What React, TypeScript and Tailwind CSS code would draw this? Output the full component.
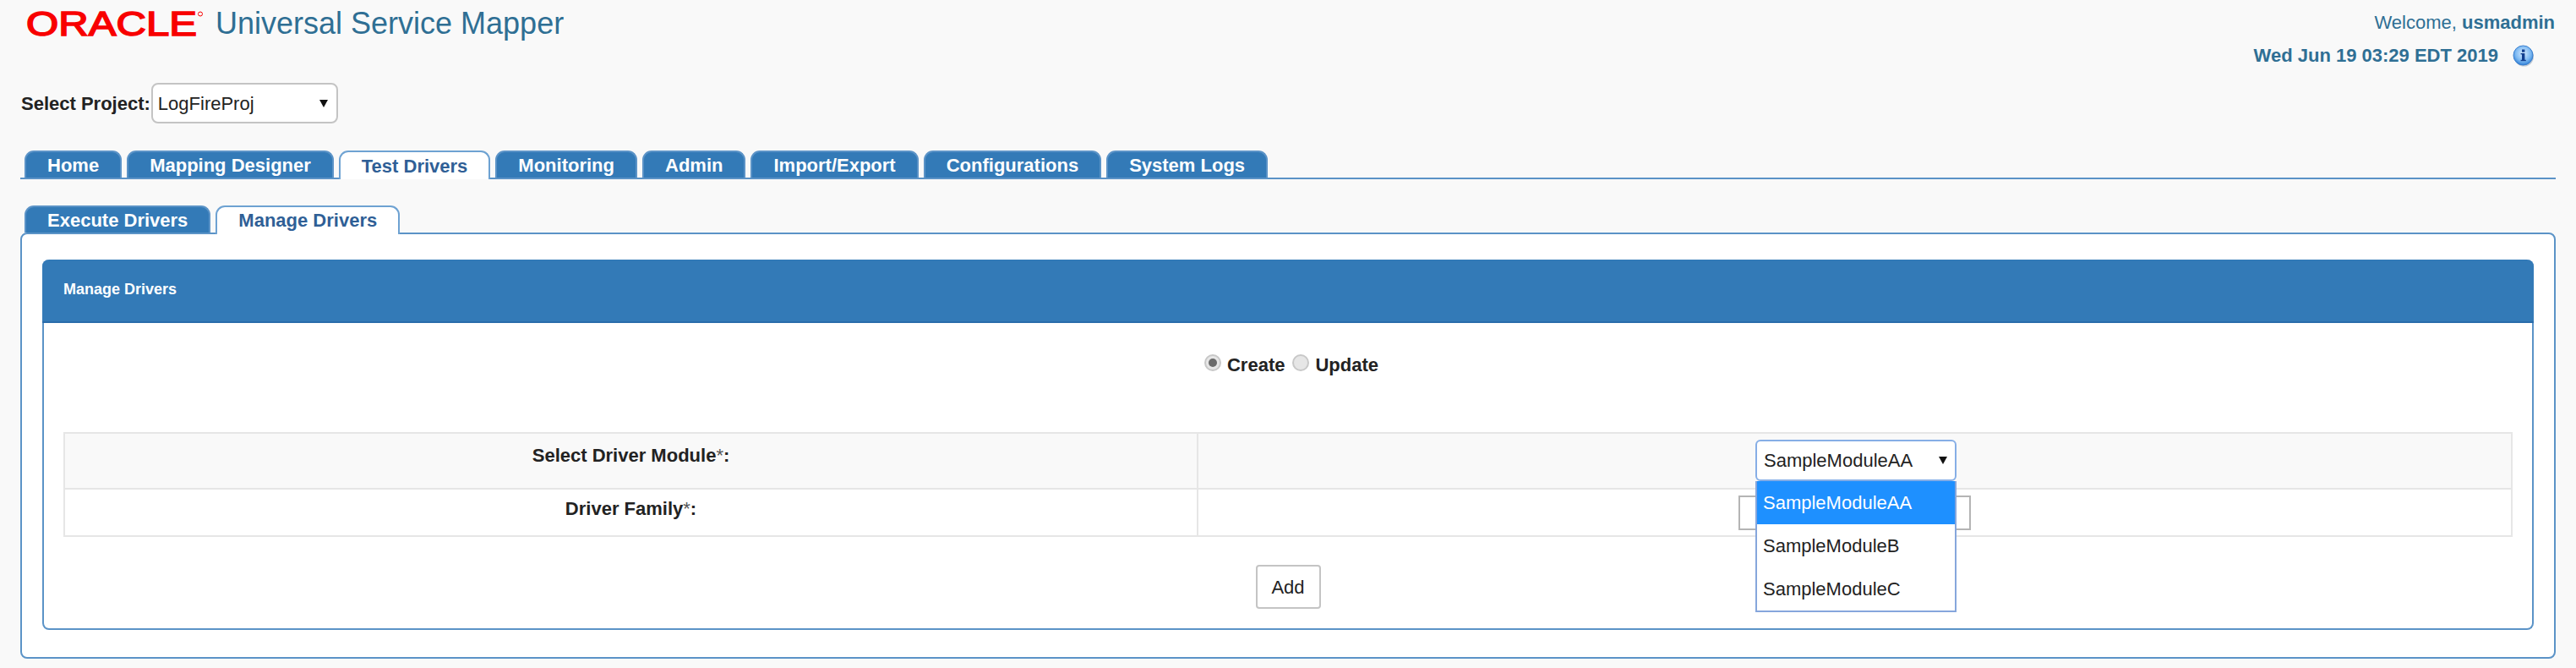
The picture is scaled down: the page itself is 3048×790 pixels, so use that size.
import React from 'react';

const mainTabs = ['Home', 'Mapping Designer', 'Test Drivers', 'Monitoring', 'Admin', 'Import/Export', 'Configurations', 'System Logs'];
const subTabs = ['Execute Drivers', 'Manage Drivers'];
const moduleOptions = ['SampleModuleAA', 'SampleModuleB', 'SampleModuleC'];

const Arrow = () => (
  <svg width="10" height="9" viewBox="0 0 10 9" className="shrink-0">
    <polygon points="0,0 10,0 5,9" fill="#111" />
  </svg>
);

const OracleLogo = () => (
  <svg width="216" height="38" viewBox="0 0 216 38" className="shrink-0">
    <text
      x="1"
      y="32"
      fontFamily="'Liberation Sans', Arial, sans-serif"
      fontSize="40"
      fontWeight="400"
      fill="#f80000"
      stroke="#f80000"
      strokeWidth="1.6"
      textLength="202"
      lengthAdjust="spacingAndGlyphs"
    >
      ORACLE
    </text>
    <circle cx="207" cy="6.5" r="2.5" fill="none" stroke="#f80000" strokeWidth="1" />
  </svg>
);

const InfoIcon = () => (
  <svg width="26" height="26" viewBox="0 0 26 26" className="shrink-0">
    <defs>
      <radialGradient id="infoFill" cx="50%" cy="40%" r="60%">
        <stop offset="0%" stopColor="#d8ecff" />
        <stop offset="65%" stopColor="#7db9f2" />
        <stop offset="100%" stopColor="#2f7fd6" />
      </radialGradient>
    </defs>
    <circle cx="13.5" cy="14" r="11.5" fill="#8a9bb0" opacity="0.5" />
    <circle cx="12.5" cy="12.5" r="11.5" fill="url(#infoFill)" stroke="#3a7fcf" strokeWidth="1" />
    <rect x="11" y="5.5" width="3.4" height="3.2" fill="#123f8f" />
    <rect x="11" y="10" width="3.4" height="9" fill="#123f8f" />
    <rect x="9.6" y="10" width="2" height="1.4" fill="#123f8f" />
    <rect x="9.6" y="17.8" width="6.2" height="1.4" fill="#123f8f" />
  </svg>
);

const Radio: React.FC<{ checked?: boolean }> = ({ checked }) => (
  <span className="flex h-[20px] w-[20px] items-center justify-center rounded-full border-2 border-[#c8c8c8] bg-[#e6e6e6]">
    {checked && <span className="h-[10px] w-[10px] rounded-full bg-[#6a6a6a]" />}
  </span>
);

const App: React.FC = () => {
  return (
    <div className="h-[790px] overflow-hidden bg-[#f9f9f9] font-['Liberation_Sans',Arial,sans-serif] text-[22px] text-[#222]">
      {/* Header */}
      <div className="flex h-[98px] justify-between pl-[30px] pr-[25px]">
        <div className="flex h-[60px] items-start pt-[10px]">
          <OracleLogo />
          <span className="ml-[9px] text-[36px] leading-[36px] text-[#2f6f94]">Universal Service Mapper</span>
        </div>
        <div className="flex flex-col items-end pt-[14px] text-[#2f6f94]">
          <div className="leading-[26px]">
            Welcome, <b>usmadmin</b>
          </div>
          <div className="mt-[13px] flex items-center pr-[24px] font-bold leading-[26px]">
            Wed Jun 19 03:29 EDT 2019
            <span className="ml-[17px]">
              <InfoIcon />
            </span>
          </div>
        </div>
      </div>

      {/* Project select */}
      <div className="flex h-[48px] items-center pl-[25px]">
        <span className="font-bold">Select Project:</span>
        <div className="ml-[1px] flex h-[48px] w-[221px] items-center justify-between rounded-[8px] border-2 border-[#c4c4c4] bg-white pl-[6px] pr-[10px]">
          LogFireProj
          <Arrow />
        </div>
      </div>

      {/* Main tabs */}
      <div className="mx-[24px] mt-[32px] flex h-[34px] gap-[6px] border-b-2 border-[#5b93c7] pl-[5px]">
        {mainTabs.map(tab =>
          tab === 'Test Drivers' ? (
            <div
              key={tab}
              className="flex h-[34px] items-center rounded-t-[11px] border-2 border-b-0 border-[#6ea2d2] bg-white px-[25px] font-bold text-[#2f5f96]"
            >
              {tab}
            </div>
          ) : (
            <div
              key={tab}
              className="flex h-[32px] items-center rounded-t-[11px] border-2 border-b-0 border-[#5b93c7] bg-[#337ab7] px-[25px] font-bold text-white"
            >
              {tab}
            </div>
          )
        )}
      </div>

      {/* Sub tabs */}
      <div className="mx-[24px] mt-[31px] flex h-[32px] gap-[6px] pl-[5px]">
        {subTabs.map(tab =>
          tab === 'Manage Drivers' ? (
            <div
              key={tab}
              className="relative z-10 flex h-[34px] items-center rounded-t-[11px] border-2 border-b-0 border-[#6ea2d2] bg-white px-[25px] pb-[2px] font-bold text-[#2f5f96]"
            >
              {tab}
            </div>
          ) : (
            <div
              key={tab}
              className="flex h-[32px] items-center rounded-t-[11px] border-2 border-b-0 border-[#5b93c7] bg-[#337ab7] px-[25px] font-bold text-white"
            >
              {tab}
            </div>
          )
        )}
      </div>

      {/* Outer box */}
      <div className="mx-[24px] h-[504px] rounded-[8px] border-2 border-[#5b93c7] bg-white px-[24px] pt-[30px]">
        <div className="h-[438px] rounded-[8px] border-2 border-t-0 border-[#5b93c7]">
          <div className="-mx-[2px] flex h-[75px] items-center rounded-t-[8px] border-b-2 border-[#2a6cab] bg-[#337ab7] pb-[2px] pl-[25px] text-[18px] font-bold text-white">
            Manage Drivers
          </div>

          <div className="flex h-[129px] items-start justify-center pl-[8px] pt-[37px] font-bold leading-[26px] text-[#222]">
            <Radio checked />
            <span className="ml-[7px]">Create</span>
            <span className="ml-[9px]"><Radio /></span>
            <span className="ml-[7px]">Update</span>
          </div>

          <div className="mx-[23px] border-2 border-[#e6e6e6]">
            <div className="flex h-[66px] border-b-2 border-[#e6e6e6] bg-[#f9f9f9]">
              <div className="w-[1341px] border-r-2 border-[#e6e6e6] pt-[9px] text-center font-bold">
                Select Driver Module<span className="font-normal text-[#555]">*</span>:
              </div>
              <div className="flex-1" />
            </div>
            <div className="flex h-[54px]">
              <div className="w-[1341px] border-r-2 border-[#e6e6e6] pt-[6px] text-center font-bold">
                Driver Family<span className="font-normal text-[#555]">*</span>:
              </div>
              <div className="relative flex-1">
                <div className="absolute left-[639px] top-[7px] h-[41px] w-[275px] border-2 border-[#b4b4b4] bg-white" />
              </div>
            </div>
          </div>

          <div className="mt-[33px] flex justify-center">
            <button className="h-[52px] w-[77px] rounded-[4px] border-2 border-[#c4c4c4] bg-white text-[22px] text-[#222]">Add</button>
          </div>
        </div>
      </div>

      {/* Open dropdown, over the form */}
      <div className="absolute left-[2077px] top-[520px] w-[238px] text-[#222]">
        <div className="flex h-[49px] items-center justify-between rounded-[6px] border-2 border-[#86aee6] bg-white pl-[8px] pr-[9px]">
          SampleModuleAA
          <Arrow />
        </div>
        <div className="border-2 border-t-0 border-[#86a6dc] bg-white">
          {moduleOptions.map((option, i) => (
            <div
              key={option}
              className={`flex h-[51px] items-center pl-[7px] ${i === 0 ? 'bg-[#1e90ff] text-white' : ''}`}
            >
              {option}
            </div>
          ))}
        </div>
      </div>
    </div>
  );
};

export default App;
